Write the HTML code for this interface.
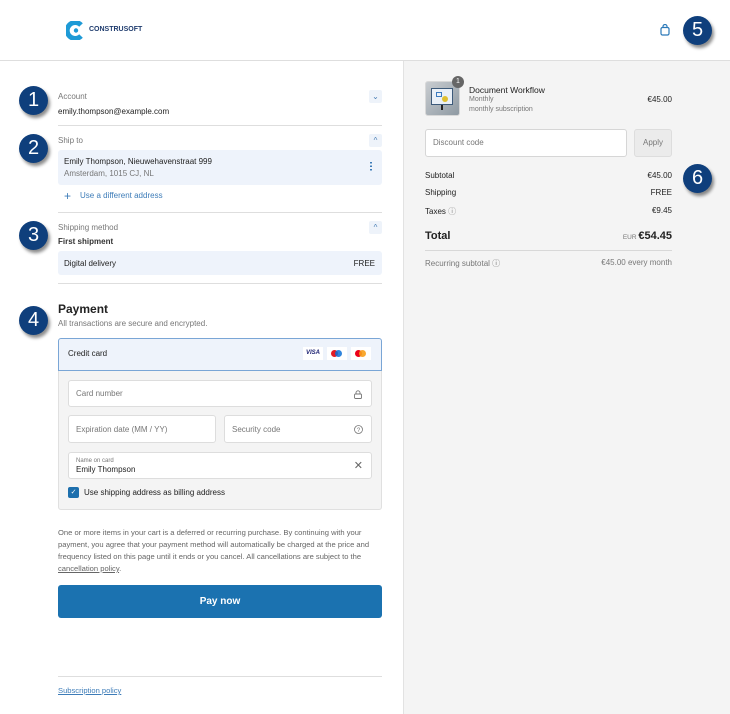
<!DOCTYPE html>
<html><head><meta charset="utf-8"><style>
*{margin:0;padding:0;box-sizing:border-box}
body{width:730px;height:714px;position:relative;overflow:hidden;background:#fff;font-family:"Liberation Sans",sans-serif;color:#222}
.a{position:absolute;white-space:nowrap}
.lbl{font-size:8px;color:#777}
.t{font-size:8px;color:#222}
.hr{position:absolute;height:1px;background:#dedede}
.badge{position:absolute;width:29px;height:29px;border-radius:50%;background:#0f3f7c;color:#fff;font-size:20px;text-align:center;line-height:29px;box-shadow:2px 3px 3px rgba(0,0,0,.45)}
.chev{position:absolute;width:13px;height:13px;background:#eef3fa;border-radius:2px;color:#4a7fb5;font-size:8px;text-align:center;line-height:13px}
.inp{position:absolute;background:#fff;border:1px solid #ddd;border-radius:3px;font-size:8px;color:#777;padding-left:7px}
</style></head><body>
<svg class="a" style="left:66px;top:21px" width="20" height="19" viewBox="0 0 20 19"><path d="M15 4 A8 8 0 1 0 15 15" stroke="#1e9ad6" stroke-width="5" fill="none"/><circle cx="10" cy="9.5" r="2.2" fill="#1e9ad6"/></svg>
<div class="a" style="left:89px;top:26px;font-size:7px;font-weight:bold;color:#1f3c6e">CONSTRUSOFT</div>
<svg class="a" style="left:660px;top:24px" width="10" height="12" viewBox="0 0 10 12"><rect x="1" y="3.5" width="8" height="7.5" rx="1.5" fill="none" stroke="#2a78b8" stroke-width="1.2"/><path d="M3 4V2.5a2 2 0 0 1 4 0V4" fill="none" stroke="#2a78b8" stroke-width="1.2"/></svg>
<div class="badge" style="left:683px;top:16px">5</div>
<div class="hr" style="left:0;top:60px;width:730px"></div>
<div class="a" style="left:403px;top:61px;width:327px;height:653px;background:#f4f4f4;border-left:1px solid #e2e2e2"></div>
<div class="a" style="left:425px;top:81px;width:35px;height:35px;border-radius:3px;border:1px solid #d8d8d8;background:linear-gradient(135deg,#c8ccd0,#8f9aa3)"></div>
<div class="a" style="left:431px;top:88px;width:22px;height:17px;background:#eaf0f7;border:1px solid #3d5a7a"></div>
<div class="a" style="left:436px;top:92px;width:6px;height:5px;border:1px solid #3a7ac0"></div>
<div class="a" style="left:442px;top:96px;width:6px;height:6px;border-radius:50%;background:#e0c030"></div>
<div class="a" style="left:441px;top:105px;width:2px;height:5px;background:#222"></div>
<div class="a" style="left:452px;top:76px;width:12px;height:12px;border-radius:50%;background:#666;color:#fff;font-size:7px;text-align:center;line-height:12px">1</div>
<div class="a t" style="left:469px;top:85px;font-size:8.5px">Document Workflow</div>
<div class="a lbl" style="left:469px;top:96px;font-size:7px">Monthly</div>
<div class="a lbl" style="left:469px;top:106px;font-size:7px">monthly subscription</div>
<div class="a t" style="right:58px;top:95px">€45.00</div>
<div class="inp" style="left:425px;top:129px;width:202px;height:28px;line-height:26px;border-color:#d6d6d6">Discount code</div>
<div class="a" style="left:634px;top:129px;width:38px;height:28px;background:#ebebeb;border:1px solid #ddd;border-radius:3px;font-size:8px;color:#777;text-align:center;line-height:26px">Apply</div>
<div class="a t" style="left:425px;top:171px">Subtotal</div><div class="a t" style="right:58px;top:171px">€45.00</div>
<div class="a t" style="left:425px;top:188px">Shipping</div><div class="a t" style="right:58px;top:188px">FREE</div>
<div class="a t" style="left:425px;top:206px">Taxes <span style="color:#888">ⓘ</span></div><div class="a t" style="right:58px;top:206px">€9.45</div>
<div class="a" style="left:425px;top:230px;font-size:11px;font-weight:bold">Total</div>
<div class="a" style="right:58px;top:230px;font-size:11px;font-weight:bold"><span style="font-size:6.5px;font-weight:normal;color:#777">EUR </span>€54.45</div>
<div class="hr" style="left:425px;top:250px;width:247px;background:#d8d8d8"></div>
<div class="a lbl" style="left:425px;top:258px">Recurring subtotal ⓘ</div><div class="a lbl" style="right:58px;top:258px">€45.00 every month</div>
<div class="badge" style="left:683px;top:164px">6</div>
<div class="badge" style="left:19px;top:86px">1</div>
<div class="a lbl" style="left:58px;top:92px">Account</div>
<div class="a t" style="left:58px;top:107px">emily.thompson@example.com</div>
<div class="chev" style="left:369px;top:90px">⌄</div>
<div class="hr" style="left:58px;top:125px;width:324px"></div>
<div class="badge" style="left:19px;top:134px">2</div>
<div class="a lbl" style="left:58px;top:136px">Ship to</div>
<div class="chev" style="left:369px;top:134px">^</div>
<div class="a" style="left:58px;top:150px;width:324px;height:35px;background:#eef3fb;border-radius:3px"></div>
<div class="a t" style="left:64px;top:157px">Emily Thompson, Nieuwehavenstraat 999</div>
<div class="a lbl" style="left:64px;top:169px">Amsterdam, 1015 CJ, NL</div>
<div class="a" style="left:370px;top:161px;width:2px;height:10px;background:radial-gradient(circle,#3d7cb8 1px,transparent 1px) 0 0/2px 3.5px"></div>
<div class="a" style="left:64px;top:189px;font-size:12px;color:#3d7cb8">+</div>
<div class="a" style="left:80px;top:191px;font-size:8px;color:#3d7cb8">Use a different address</div>
<div class="hr" style="left:58px;top:212px;width:324px"></div>
<div class="badge" style="left:19px;top:221px">3</div>
<div class="a lbl" style="left:58px;top:223px">Shipping method</div>
<div class="chev" style="left:369px;top:221px">^</div>
<div class="a t" style="left:58px;top:237px;font-weight:bold;color:#333">First shipment</div>
<div class="a" style="left:58px;top:251px;width:324px;height:24px;background:#eef3fb;border-radius:3px"></div>
<div class="a t" style="left:64px;top:259px">Digital delivery</div>
<div class="a t" style="right:355px;top:259px">FREE</div>
<div class="hr" style="left:58px;top:283px;width:324px"></div>
<div class="badge" style="left:19px;top:306px">4</div>
<div class="a" style="left:58px;top:302px;font-size:12px;font-weight:bold">Payment</div>
<div class="a lbl" style="left:58px;top:319px">All transactions are secure and encrypted.</div>
<div class="a" style="left:58px;top:370px;width:324px;height:140px;background:#f4f4f4;border:1px solid #e0e0e0;border-top:none;border-radius:0 0 3px 3px"></div>
<div class="a" style="left:58px;top:338px;width:324px;height:33px;background:#eef3fb;border:1px solid #7aa6d6;border-radius:3px 3px 0 0"></div>
<div class="a t" style="left:68px;top:349px">Credit card</div>
<div class="a" style="left:303px;top:347px;width:20px;height:13px;background:#fff;font-size:6px;font-weight:bold;font-style:italic;color:#1a1f71;text-align:center;line-height:13px">VISA</div>
<div class="a" style="left:327px;top:347px;width:20px;height:13px;background:#fff"><div class="a" style="left:4px;top:3px;width:7px;height:7px;border-radius:50%;background:#e31b23"></div><div class="a" style="left:8px;top:3px;width:7px;height:7px;border-radius:50%;background:#0a6fd6;opacity:.85"></div></div>
<div class="a" style="left:351px;top:347px;width:20px;height:13px;background:#fff"><div class="a" style="left:4px;top:3px;width:7px;height:7px;border-radius:50%;background:#eb001b"></div><div class="a" style="left:8px;top:3px;width:7px;height:7px;border-radius:50%;background:#f79e1b;opacity:.9"></div></div>
<div class="inp" style="left:68px;top:380px;width:304px;height:27px;line-height:26px">Card number<svg style="position:absolute;right:9px;top:9px" width="8" height="9" viewBox="0 0 8 9"><rect x="0.5" y="4" width="7" height="4.5" rx="1" fill="none" stroke="#777" stroke-width="0.9"/><path d="M2 4V2.8a2 2 0 0 1 4 0V4" fill="none" stroke="#777" stroke-width="0.9"/></svg></div>
<div class="inp" style="left:68px;top:415px;width:148px;height:28px;line-height:27px">Expiration date (MM / YY)</div>
<div class="inp" style="left:224px;top:415px;width:148px;height:28px;line-height:27px">Security code<svg style="position:absolute;right:8px;top:9px" width="9" height="9" viewBox="0 0 9 9"><circle cx="4.5" cy="4.5" r="4" fill="none" stroke="#777" stroke-width="0.8"/><text x="4.5" y="7" font-size="6" text-anchor="middle" fill="#777" font-family="Liberation Sans">?</text></svg></div>
<div class="inp" style="left:68px;top:452px;width:304px;height:27px"><div style="font-size:6px;line-height:7px;margin-top:5px">Name on card</div><div style="font-size:8px;color:#222;line-height:10px">Emily Thompson</div><span style="position:absolute;right:8px;top:6px;font-size:11px;color:#666">✕</span></div>
<div class="a" style="left:68px;top:487px;width:11px;height:11px;background:#1d6fad;border-radius:2px;color:#fff;font-size:7px;text-align:center;line-height:11px">✓</div>
<div class="a t" style="left:84px;top:488px">Use shipping address as billing address</div>
<div class="a" style="left:58px;top:527px;width:330px;font-size:7.6px;line-height:12px;color:#666;white-space:normal">One or more items in your cart is a deferred or recurring purchase. By continuing with your payment, you agree that your payment method will automatically be charged at the price and frequency listed on this page until it ends or you cancel. All cancellations are subject to the <u>cancellation policy</u>.</div>
<div class="a" style="left:58px;top:585px;width:324px;height:33px;background:#1b72b0;border-radius:3px;color:#fff;font-size:10px;font-weight:bold;text-align:center;line-height:33px">Pay now</div>
<div class="hr" style="left:58px;top:676px;width:324px"></div>
<div class="a" style="left:58px;top:686px;font-size:7.6px;color:#3d7cb8;text-decoration:underline">Subscription policy</div>
</body></html>
